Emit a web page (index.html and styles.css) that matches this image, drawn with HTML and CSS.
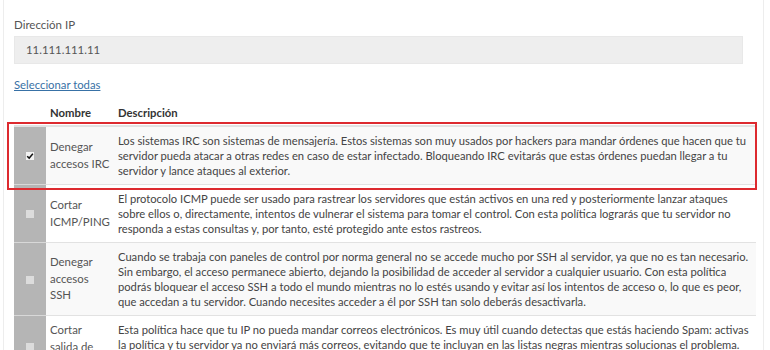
FILE: index.html
```html
<!DOCTYPE html>
<html lang="es">
<head>
<meta charset="utf-8">
<title>Políticas</title>
<link rel="stylesheet" href="styles.css">
</head>
<body>
<div class="panel">
  <div class="field">
    <div class="label">Dirección IP</div>
    <div class="input">11.111.111.11</div>
  </div>
  <a class="select-all" href="#">Seleccionar todas</a>
  <div class="table-wrap">
    <table class="policies">
      <thead>
        <tr>
          <th class="col-check"></th>
          <th class="col-name">Nombre</th>
          <th class="col-desc">Descripción</th>
        </tr>
      </thead>
      <tbody>
        <tr>
          <td class="col-check"><span class="cb checked"><svg viewBox="0 0 10 10" width="8" height="8"><path d="M1.5 5.2 L4 7.6 L8.6 2.2" fill="none" stroke="#111" stroke-width="1.8"/></svg></span></td>
          <td class="col-name">Denegar accesos IRC</td>
          <td class="col-desc">Los sistemas IRC son sistemas de mensajería. Estos sistemas son muy usados por hackers para mandar órdenes que hacen que tu servidor pueda atacar a otras redes en caso de estar infectado. Bloqueando IRC evitarás que estas órdenes puedan llegar a tu servidor y lance ataques al exterior.</td>
        </tr>
        <tr>
          <td class="col-check"><span class="cb"></span></td>
          <td class="col-name">Cortar ICMP/PING</td>
          <td class="col-desc">El protocolo ICMP puede ser usado para rastrear los servidores que están activos en una red y posteriormente lanzar ataques sobre ellos o, directamente, intentos de vulnerar el sistema para tomar el control. Con esta política lograrás que tu servidor no responda a estas consultas y, por tanto, esté protegido ante estos rastreos.</td>
        </tr>
        <tr>
          <td class="col-check"><span class="cb"></span></td>
          <td class="col-name">Denegar accesos SSH</td>
          <td class="col-desc">Cuando se trabaja con paneles de control por norma general no se accede mucho por SSH al servidor, ya que no es tan necesario. Sin embargo, el acceso permanece abierto, dejando la posibilidad de acceder al servidor a cualquier usuario. Con esta política podrás bloquear el acceso SSH a todo el mundo mientras no lo estés usando y evitar así los intentos de acceso o, lo que es peor, que accedan a tu servidor. Cuando necesites acceder a él por SSH tan solo deberás desactivarla.</td>
        </tr>
        <tr>
          <td class="col-check"><span class="cb"></span></td>
          <td class="col-name">Cortar salida de correo</td>
          <td class="col-desc">Esta política hace que tu IP no pueda mandar correos electrónicos. Es muy útil cuando detectas que estás haciendo Spam: activas la política y tu servidor ya no enviará más correos, evitando que te incluyan en las listas negras mientras solucionas el problema.</td>
        </tr>
      </tbody>
    </table>
    <div class="highlight"></div>
  </div>
</div>
</body>
</html>
```

FILE: styles.css
```css
html, body {
  margin: 0;
  padding: 0;
  background: #fff;
}
body {
  font-family: Lato, "Noto Sans", sans-serif;
  color: #444;
  font-size: 11.2px;
  line-height: 15px;
  overflow: hidden;
}
.panel {
  margin: 0 6px 0 3px;
  height: 350px;
  border-left: 1px solid #ededed;
  border-right: 1px solid #ededed;
  padding: 17px 7px 0 10px;
  box-sizing: border-box;
  overflow: hidden;
}
.label {
  font-size: 11.5px;
  color: #555;
  line-height: 15px;
}
.input {
  margin: 4px 13px 0 0;
  height: 28px;
  background: #eeeeee;
  border: 1px solid #e8e8e8;
  box-sizing: border-box;
  padding-left: 11px;
  line-height: 26px;
  font-size: 11.4px;
  color: #555;
}
.select-all {
  display: inline-block;
  margin-top: 13px;
  font-size: 11.3px;
  line-height: 15px;
  color: #3871a6;
  text-decoration: underline;
}
.table-wrap {
  position: relative;
  margin-top: 7px;
}
.policies {
  width: 100%;
  border-collapse: collapse;
  table-layout: fixed;
}
.policies th {
  text-align: left;
  font-weight: bold;
  color: #333;
  font-size: 11.3px;
  line-height: 15px;
  padding: 6px 4px 5px 4px;
  border-bottom: 2px solid #e2e2e2;
}
.policies th.col-desc {
  padding-left: 6px;
}
.policies td {
  border-top: 1px solid #e2e2e2;
  padding: 6px;
  vertical-align: middle;
}
.policies tbody tr:nth-child(odd) td {
  background: #f9f9f9;
}
.policies tbody tr:first-child td {
  border-top: none;
}
.col-check {
  width: 32px;
  box-sizing: border-box;
}
.policies td.col-check {
  background: #b5b5b5 !important;
  text-align: center;
  padding: 0;
  border-top-color: #d8d8d8;
}
.col-name {
  width: 66px;
  box-sizing: border-box;
}
.policies td.col-name {
  padding: 6px 0 6px 4px;
  font-size: 11.4px;
  line-height: 16.5px;
  color: #555;
}
.policies td.col-desc {
  vertical-align: top;
  color: #444;
  padding-right: 0;
}
.cb {
  display: inline-block;
  width: 8px;
  height: 8px;
  background: #dcdcdc;
  vertical-align: middle;
  position: relative;
  top: -1px;
}
.cb.checked {
  background: #f2f2f2;
}
.cb svg {
  display: block;
}
.highlight {
  position: absolute;
  left: -7px;
  right: -1px;
  top: 23px;
  height: 68px;
  border: 2px solid #dd2a2f;
  box-sizing: border-box;
  pointer-events: none;
}
```
